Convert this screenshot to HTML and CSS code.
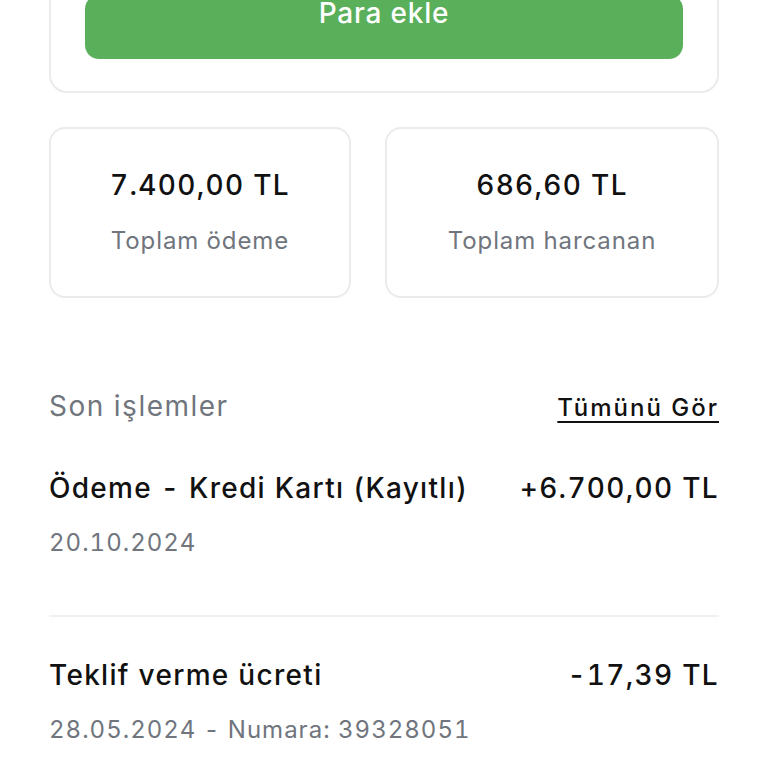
FILE: index.html
```html
<!DOCTYPE html>
<html lang="tr">
<head>
    <meta charset="UTF-8">
    <meta name="viewport" content="width=device-width, initial-scale=1.0">
    <title>Cüzdan</title>
    <link rel="stylesheet" href="styles.css">
</head>
<body>
    <main class="wallet">
        <section class="balance-card">
            <button class="add-btn">Para ekle</button>
        </section>

        <section class="stats">
            <div class="stat-card">
                <div class="stat-value">7.400,00 TL</div>
                <div class="stat-label">Toplam ödeme</div>
            </div>
            <div class="stat-card">
                <div class="stat-value">686,60 TL</div>
                <div class="stat-label">Toplam harcanan</div>
            </div>
        </section>

        <section class="transactions">
            <div class="tx-header">
                <h2>Son işlemler</h2>
                <a href="#" class="see-all">Tümünü Gör</a>
            </div>
            <div class="tx-row">
                <div class="tx-top">
                    <span class="tx-title">Ödeme - Kredi Kartı (Kayıtlı)</span>
                    <span class="tx-amount">+6.700,00 TL</span>
                </div>
                <div class="tx-meta">20.10.2024</div>
            </div>
            <div class="tx-row">
                <div class="tx-top">
                    <span class="tx-title">Teklif verme ücreti</span>
                    <span class="tx-amount">-17,39 TL</span>
                </div>
                <div class="tx-meta">28.05.2024 - Numara: 39328051</div>
            </div>
        </section>
    </main>
</body>
</html>
```

FILE: styles.css
```css
body {
    margin: 0;
    font-family: Inter, "Noto Sans", sans-serif;
    font-variant-numeric: tabular-nums;
    letter-spacing: 1.3px;
    background-color: #ffffff;
    color: #111111;
    overflow: hidden;
}
.wallet {
    padding: 0 49px;
}
.balance-card {
    margin-top: -39px;
    padding: 32px 34px;
    border: 2px solid #ebebeb;
    border-radius: 18px;
}
.add-btn {
    display: block;
    width: 100%;
    height: 64px;
    border: none;
    border-radius: 14px;
    background-color: #5aaf5a;
    color: #ffffff;
    font-family: inherit;
    font-size: 28px;
    font-weight: 500;
    letter-spacing: 0.8px;
    padding: 0 0 28px;
}
.stats {
    display: grid;
    grid-template-columns: 302px 1fr;
    gap: 34px;
    margin-top: 34px;
}
.stat-card {
    height: 171px;
    box-sizing: border-box;
    border: 2px solid #ebebeb;
    border-radius: 16px;
    display: flex;
    flex-direction: column;
    align-items: center;
    justify-content: center;
    gap: 22px;
}
.stat-value {
    font-size: 28px;
    font-weight: 500;
    line-height: 36px;
    margin-top: -2px;
}
.stat-label {
    font-size: 24px;
    line-height: 32px;
    letter-spacing: 0.9px;
    color: #70757e;
}
.transactions {
    margin-top: 88px;
}
.tx-header {
    display: flex;
    justify-content: space-between;
    align-items: baseline;
    margin-bottom: 4px;
}
.tx-header h2 {
    margin: 0;
    font-size: 28px;
    font-weight: 400;
    line-height: 40px;
    letter-spacing: 1.5px;
    color: #70757e;
}
.see-all {
    font-size: 24px;
    font-weight: 500;
    letter-spacing: 2px;
    color: #111111;
    text-decoration: underline;
    text-decoration-thickness: 2px;
    text-underline-offset: 5px;
}
.tx-row {
    padding: 38px 0 55px;
    border-bottom: 2px solid #f0f0f0;
}
.tx-top {
    display: flex;
    justify-content: space-between;
    font-size: 28px;
    font-weight: 500;
    line-height: 40px;
}
.tx-meta {
    margin-top: 18px;
    font-size: 24px;
    line-height: 34px;
    letter-spacing: 1px;
    color: #70757e;
}
```
